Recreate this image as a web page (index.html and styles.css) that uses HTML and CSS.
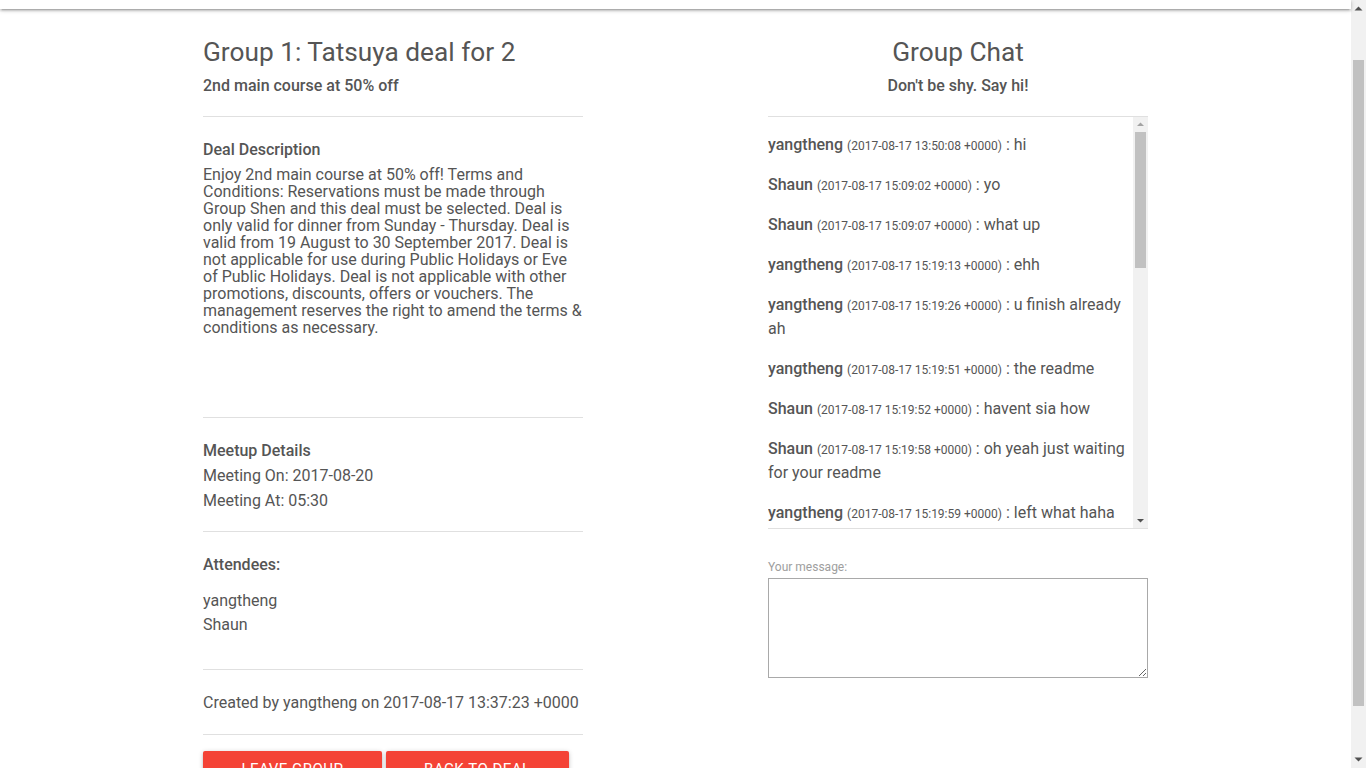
FILE: index.html
```html
<!DOCTYPE html>
<html lang="en">
<head>
<meta charset="utf-8">
<title>Group 1: Tatsuya deal for 2</title>
<link rel="stylesheet" href="styles.css">
</head>
<body>
<div class="page">
  <header class="navbar"></header>
  <main class="container">
    <section class="group-col">
      <h1 class="page-title">Group 1: Tatsuya deal for 2</h1>
      <p class="subtitle">2nd main course at 50% off</p>
      <div class="block block-deal">
        <h2 class="block-title">Deal Description</h2>
        <p class="deal-text">Enjoy 2nd main course at 50% off! Terms and Conditions: Reservations must be made through Group Shen and this deal must be selected. Deal is only valid for dinner from Sunday - Thursday. Deal is valid from 19 August to 30 September 2017. Deal is not applicable for use during Public Holidays or Eve of Public Holidays. Deal is not applicable with other promotions, discounts, offers or vouchers. The management reserves the right to amend the terms &amp; conditions as necessary.</p>
      </div>
      <div class="block block-meetup">
        <h2 class="block-title">Meetup Details</h2>
        <p class="detail-line">Meeting On: 2017-08-20</p>
        <p class="detail-line">Meeting At: 05:30</p>
      </div>
      <div class="block block-attendees">
        <h2 class="block-title">Attendees:</h2>
        <ul class="attendee-list">
          <li>yangtheng</li>
          <li>Shaun</li>
        </ul>
      </div>
      <div class="block block-created">
        <p class="detail-line">Created by yangtheng on 2017-08-17 13:37:23 +0000</p>
      </div>
      <div class="block block-actions">
        <button class="btn btn-leave" type="button">Leave Group</button>
        <button class="btn" type="button">Back to Deal</button>
      </div>
    </section>

    <section class="chat-col">
      <h1 class="page-title center">Group Chat</h1>
      <p class="subtitle center">Don't be shy. Say hi!</p>
      <div class="chat-box">
        <div class="chat-list">
          <p class="msg"><strong class="msg-user">yangtheng</strong> <span class="msg-time">(2017-08-17 13:50:08 +0000)</span> : hi</p>
          <p class="msg"><strong class="msg-user">Shaun</strong> <span class="msg-time">(2017-08-17 15:09:02 +0000)</span> : yo</p>
          <p class="msg"><strong class="msg-user">Shaun</strong> <span class="msg-time">(2017-08-17 15:09:07 +0000)</span> : what up</p>
          <p class="msg"><strong class="msg-user">yangtheng</strong> <span class="msg-time">(2017-08-17 15:19:13 +0000)</span> : ehh</p>
          <p class="msg"><strong class="msg-user">yangtheng</strong> <span class="msg-time">(2017-08-17 15:19:26 +0000)</span> : u finish already ah</p>
          <p class="msg"><strong class="msg-user">yangtheng</strong> <span class="msg-time">(2017-08-17 15:19:51 +0000)</span> : the readme</p>
          <p class="msg"><strong class="msg-user">Shaun</strong> <span class="msg-time">(2017-08-17 15:19:52 +0000)</span> : havent sia how</p>
          <p class="msg"><strong class="msg-user">Shaun</strong> <span class="msg-time">(2017-08-17 15:19:58 +0000)</span> : oh yeah just waiting for your readme</p>
          <p class="msg"><strong class="msg-user">yangtheng</strong> <span class="msg-time">(2017-08-17 15:19:59 +0000)</span> : left what haha</p>
          <p class="msg"><strong class="msg-user">yangtheng</strong> <span class="msg-time">(2017-08-17 15:20:04 +0000)</span> : wait ah</p>
          <p class="msg"><strong class="msg-user">Shaun</strong> <span class="msg-time">(2017-08-17 15:20:11 +0000)</span> : ok</p>
        </div>
        <div class="scrollbar scrollbar-chat" aria-hidden="true">
          <span class="sb-arrow sb-arrow-off"><svg viewBox="0 0 15 15" width="15" height="15"><polygon points="4,9 11,9 7.5,5.5"/></svg></span>
          <div class="sb-track"><div class="sb-thumb"></div></div>
          <span class="sb-arrow"><svg viewBox="0 0 15 15" width="15" height="15"><polygon points="4,6 11,6 7.5,9.5"/></svg></span>
        </div>
      </div>
      <label class="msg-label" for="message">Your message:</label>
      <textarea id="message" class="msg-input"></textarea>
    </section>
  </main>
</div>
<div class="scrollbar scrollbar-page" aria-hidden="true">
  <span class="sb-arrow sb-arrow-page"><svg viewBox="0 0 15 17" width="15" height="17"><polygon points="3.5,10.5 11.5,10.5 7.5,6.5"/></svg></span>
  <div class="sb-track"><div class="sb-thumb"></div></div>
  <span class="sb-arrow sb-arrow-page"><svg viewBox="0 0 15 17" width="15" height="17"><polygon points="3.5,6.5 11.5,6.5 7.5,10.5"/></svg></span>
</div>
</body>
</html>
```

FILE: styles.css
```css
html, body {
  margin: 0;
  padding: 0;
}

body {
  display: flex;
  align-items: flex-start;
  font-family: Roboto, "Noto Sans", "Liberation Sans", sans-serif;
  font-size: 16px;
  color: #555;
  background: #fff;
}

.page {
  flex: 1;
  min-width: 0;
}

.navbar {
  position: relative;
  z-index: 2;
  height: 9px;
  background: #fff;
  box-shadow: 0 2px 2px 0 rgba(0, 0, 0, 0.14), 0 3px 1px -2px rgba(0, 0, 0, 0.12), 0 1px 5px 0 rgba(0, 0, 0, 0.2);
}

.container {
  width: 945px;
  margin: 0 auto;
  padding: 27px 0 86px;
  display: flex;
  justify-content: space-between;
}

.group-col,
.chat-col {
  width: 380px;
}

.page-title {
  margin: 0;
  font-size: 26.24px;
  font-weight: 400;
  line-height: 32px;
}

.subtitle {
  margin: 6px 0 18px;
  font-size: 16px;
  font-weight: 500;
  line-height: 24px;
}

.center {
  text-align: center;
}

.block {
  border-top: 1px solid #e0e0e0;
  padding: 21px 0 19px;
}

.block-title {
  margin: 0;
  font-size: 16px;
  font-weight: 500;
  line-height: 24px;
}

.block-deal {
  height: 260px;
}

.deal-text {
  margin: 4px 0 0;
  line-height: 17px;
}

.block-meetup {
  padding-bottom: 18px;
}

.detail-line {
  margin: 0;
  line-height: 25px;
}

.block-created .detail-line {
  line-height: 24px;
}

.attendee-list {
  list-style: none;
  margin: 12px 0 0;
  padding: 0;
  line-height: 24px;
}

.block-attendees {
  padding-bottom: 32px;
}

.block-actions {
  padding: 16px 0 0;
  display: flex;
  gap: 4px;
}

.btn {
  height: 36px;
  padding: 0 38px;
  border: none;
  border-radius: 2px;
  background: #f44336;
  color: #fff;
  font-family: Roboto, "Noto Sans", sans-serif;
  font-size: 15px;
  line-height: 36px;
  letter-spacing: 0.5px;
  text-transform: uppercase;
  box-shadow: 0 2px 2px 0 rgba(0, 0, 0, 0.14), 0 3px 1px -2px rgba(0, 0, 0, 0.12), 0 1px 5px 0 rgba(0, 0, 0, 0.2);
  cursor: pointer;
}

.btn-leave {
  padding: 0 38.5px;
}

/* chat */
.chat-box {
  display: flex;
  height: 411px;
  border-top: 1px solid #e0e0e0;
  border-bottom: 1px solid #e0e0e0;
}

.chat-list {
  flex: 1;
  min-width: 0;
  overflow: hidden;
  padding-top: 16px;
}

.msg {
  margin: 0 0 16px;
  line-height: 24px;
}

.msg-user {
  font-weight: 500;
}

.msg-time {
  font-size: 12px;
  line-height: 16px;
}

.msg-label {
  display: block;
  margin-top: 30px;
  font-size: 12px;
  line-height: 16px;
  color: #9e9e9e;
}

.msg-input {
  display: block;
  box-sizing: border-box;
  width: 380px;
  height: 100px;
  margin-top: 3px;
  border: 1px solid #a9a9a9;
  font-family: Roboto, sans-serif;
  font-size: 16px;
}

/* classic scrollbars */
.scrollbar {
  flex: none;
  width: 15px;
  display: flex;
  flex-direction: column;
  background: #f1f1f1;
}

.scrollbar-page {
  height: 100vh;
  position: sticky;
  top: 0;
}

.sb-arrow {
  display: block;
  height: 15px;
  fill: #505050;
}

.sb-arrow svg {
  display: block;
}

.sb-arrow-off {
  fill: #a3a3a3;
}

.sb-arrow-page {
  height: 17px;
}

.sb-track {
  flex: 1;
  padding: 0 2px;
}

.sb-thumb {
  background: #c1c1c1;
}

.scrollbar-chat .sb-thumb {
  height: 136px;
}

.scrollbar-page .sb-thumb {
  margin-top: 43px;
  height: 646px;
}
```
